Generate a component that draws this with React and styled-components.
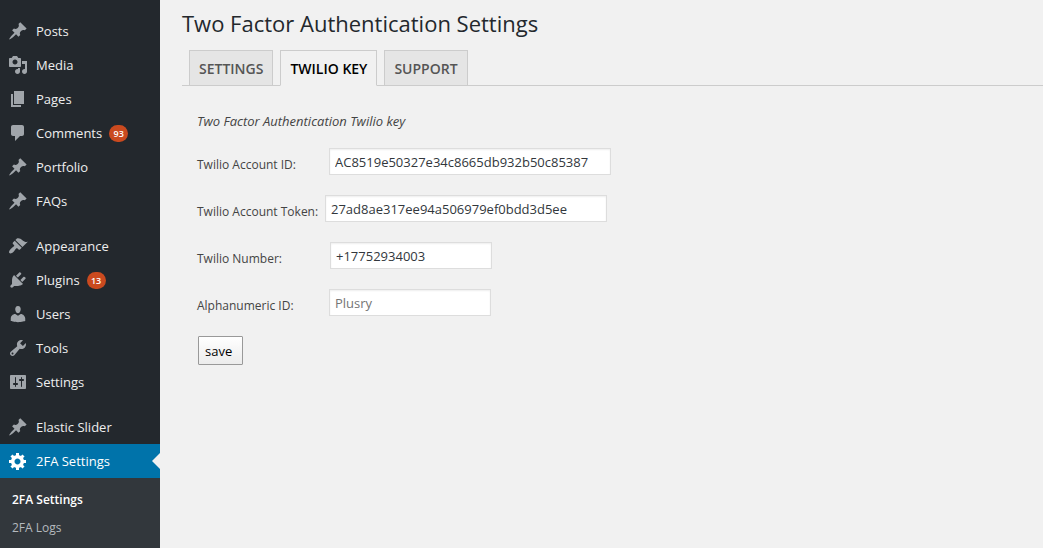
import React, { useState } from 'react';
import styled, { createGlobalStyle } from 'styled-components';

const GlobalStyle = createGlobalStyle`
  * {
    box-sizing: border-box;
  }

  body {
    margin: 0;
    background: #f1f1f1;
    color: #444;
    font-family: 'Open Sans', 'Noto Sans', sans-serif;
    font-size: 12px;
  }
`;

const Layout = styled.div`
  display: flex;
  min-height: 100vh;
`;

// Admin menu
const Sidebar = styled.nav`
  flex: 0 0 160px;
  padding-top: 14px;
  background: #23282d;
`;

const Menu = styled.ul`
  list-style: none;
  margin: 0;
  padding: 0;
`;

const MenuItem = styled.li`
  margin-top: ${(props) => (props.$separated ? '11px' : '0')};
`;

const MenuLink = styled.a`
  position: relative;
  display: flex;
  align-items: center;
  height: 34px;
  padding-left: 8px;
  font-size: 13px;
  line-height: 18px;
  text-decoration: none;
  color: ${(props) => (props.$current ? '#fff' : '#eee')};
  background: ${(props) => (props.$current ? '#0073aa' : 'transparent')};

  svg {
    flex: none;
    margin-right: 8px;
    fill: ${(props) => (props.$current ? '#fff' : '#a0a5aa')};
  }

  /* arrow that points at the open page */
  &::after {
    content: '';
    display: ${(props) => (props.$current ? 'block' : 'none')};
    position: absolute;
    top: 9px;
    right: 0;
    border: 8px solid transparent;
    border-left-width: 0;
    border-right-color: #f1f1f1;
  }
`;

const Badge = styled.span`
  min-width: 19px;
  margin-left: 7px;
  border-radius: 9px;
  background: #ca4a1f;
  color: #fff;
  font-size: 9px;
  font-weight: 600;
  line-height: 17px;
  text-align: center;
`;

const SubMenu = styled.ul`
  list-style: none;
  margin: 0;
  padding: 8px 0 6px;
  background: #32373c;
`;

const SubMenuLink = styled.a`
  display: block;
  padding: 5px 12px;
  font-size: 12px;
  line-height: 18px;
  text-decoration: none;
  font-weight: ${(props) => (props.$current ? '600' : '400')};
  color: ${(props) => (props.$current ? '#fff' : '#b4b9be')};
`;

// Settings page
const Content = styled.main`
  flex: 1;
  min-width: 0;
  padding: 7px 0 40px 22px;
`;

const Title = styled.h1`
  margin: 0;
  color: #23282d;
  font-size: 22px;
  font-weight: 400;
  line-height: 32px;
`;

const TabBar = styled.div`
  display: flex;
  gap: 7px;
  margin-top: 11px;
  padding-left: 7px;
  border-bottom: 1px solid #ccc;
`;

const Tab = styled.button`
  height: 36px;
  margin-bottom: -1px;
  padding: 0 9px;
  border: 1px solid #ccc;
  border-bottom-color: ${(props) => (props.$active ? '#f1f1f1' : '#ccc')};
  background: ${(props) => (props.$active ? '#f1f1f1' : '#e5e5e5')};
  color: ${(props) => (props.$active ? '#000' : '#555')};
  font-family: inherit;
  font-size: 14px;
  font-weight: 600;
  cursor: pointer;
`;

const Form = styled.form`
  padding: 26px 15px 0;
`;

const Description = styled.p`
  margin: 0 0 18px;
  font-size: 13px;
  font-style: italic;
  line-height: 18px;
`;

const Field = styled.div`
  display: flex;
  align-items: center;
  margin-bottom: 20px;
`;

const Label = styled.label`
  width: ${(props) => props.$width || '132px'};
  padding-top: 7px;
  line-height: 18px;
  white-space: nowrap;
`;

const Input = styled.input`
  width: ${(props) => (props.$wide ? '282px' : '162px')};
  height: 27px;
  padding: 2px 5px;
  border: 1px solid #ddd;
  background: #fff;
  box-shadow: inset 0 1px 2px rgba(0, 0, 0, 0.07);
  color: #32373c;
  font-family: inherit;
  font-size: 13px;

  &::placeholder {
    color: #757575;
    opacity: 1;
  }
`;

const SaveButton = styled.button`
  display: block;
  height: 29px;
  margin-left: 1px;
  padding: 1px 10px 0 6px;
  border: 1px solid #999;
  border-radius: 1px;
  background: linear-gradient(#fff, #ececec);
  color: #000;
  font-family: inherit;
  font-size: 13px;
  cursor: pointer;
`;

const icons = {
  pin: 'M10.44 3.02l1.82-1.82 6.36 6.35-1.83 1.82c-1.05-.68-2.48-.57-3.41.36l-.75.75c-.92.93-1.04 2.35-.35 3.41l-1.83 1.82-2.41-2.41-2.8 2.79c-.42.42-3.38 2.71-3.8 2.29s1.86-3.39 2.28-3.81l2.79-2.79L4.1 9.36l1.83-1.82c1.05.69 2.48.57 3.4-.36l.75-.75c.93-.92 1.05-2.35.36-3.41z',
  media: 'M13 11V4c0-.55-.45-1-1-1h-1.67L9 1H5L3.67 3H2c-.55 0-1 .45-1 1v7c0 .55.45 1 1 1h10c.55 0 1-.45 1-1zM7 4.5c1.38 0 2.5 1.12 2.5 2.5S8.38 9.5 7 9.5 4.5 8.38 4.5 7 5.62 4.5 7 4.5zM14 6h5v10.5c0 1.38-1.12 2.5-2.5 2.5S14 17.88 14 16.5s1.12-2.5 2.5-2.5c.17 0 .34.02.5.05V9h-3V6zm-4 8.05V13h2v3.5c0 1.38-1.12 2.5-2.5 2.5S7 17.88 7 16.5 8.12 14 9.5 14c.17 0 .34.02.5.05z',
  page: 'M6 15V2h10v13H6zm-1 1h8v2H3V5h2v11z',
  comments: 'M5 2h9c1.1 0 2 .9 2 2v7c0 1.1-.9 2-2 2h-2l-5 5v-5H5c-1.1 0-2-.9-2-2V4c0-1.1.9-2 2-2z',
  appearance: 'M14.48 11.06L7.41 3.99l1.5-1.5c.5-.56 2.3-.47 3.51.32 1.21.8 1.43 1.28 2.91 2.1 1.18.64 2.45 1.26 4.45.85zm-.71.71L6.7 4.7 4.93 6.47c-.39.39-.39 1.02 0 1.41l1.06 1.06c.39.39.39 1.03 0 1.42-.6.6-1.43 1.11-2.21 1.69-.35.26-.7.53-1.01.84C1.43 14.23.4 16.08 1.4 17.07c.99 1 2.84-.03 4.18-1.36.31-.31.58-.66.85-1.02.57-.78 1.08-1.61 1.69-2.21.39-.39 1.02-.39 1.41 0l1.06 1.06c.39.39 1.02.39 1.41 0z',
  plugins: 'M13.11 4.36L9.87 7.6 8 5.73l3.24-3.24c.35-.34 1.05-.2 1.56.32.52.51.66 1.21.31 1.55zm-8 1.77l.91-1.12 9.01 9.01-1.19.84c-.71.71-2.63 1.16-3.82 1.16H6.14L4.9 17.26c-.59.59-1.54.59-2.12 0-.59-.58-.59-1.53 0-2.12l1.24-1.24v-3.88c0-1.13.4-3.19 1.09-3.89zm7.26 3.97l3.24-3.24c.34-.35 1.04-.21 1.55.31.52.51.66 1.21.31 1.55l-3.24 3.25z',
  users: 'M10 9.25c-2.27 0-2.73-3.44-2.73-3.44C7 4.02 7.82 2 9.97 2c2.16 0 2.98 2.02 2.71 3.81 0 0-.41 3.44-2.68 3.44zm0 2.57L12.72 10c2.39 0 4.52 2.33 4.52 4.53v2.49s-3.65 1.13-7.24 1.13c-3.65 0-7.24-1.13-7.24-1.13v-2.49c0-2.25 1.94-4.48 4.47-4.48z',
  tools: 'M16.68 9.77c-1.34 1.34-3.3 1.67-4.95.99l-5.41 6.52c-.99.99-2.59.99-3.58 0s-.99-2.59 0-3.57l6.52-5.42c-.68-1.65-.35-3.61.99-4.95 1.28-1.28 3.12-1.62 4.72-1.06l-2.89 2.89 2.82 2.82 2.86-2.87c.53 1.58.18 3.39-1.08 4.65zM3.81 16.21c.4.39 1.04.39 1.43 0 .4-.4.4-1.04 0-1.43-.39-.4-1.03-.4-1.43 0-.39.39-.39 1.03 0 1.43z',
  settings: 'M18 16V4c0-.55-.45-1-1-1H3c-.55 0-1 .45-1 1v12c0 .55.45 1 1 1h14c.55 0 1-.45 1-1zM8 11h1c.55 0 1 .45 1 1s-.45 1-1 1H8v1.5c0 .28-.22.5-.5.5s-.5-.22-.5-.5V13H6c-.55 0-1-.45-1-1s.45-1 1-1h1V5.5c0-.28.22-.5.5-.5s.5.22.5.5V11zm5-2h-1c-.55 0-1-.45-1-1s.45-1 1-1h1V5.5c0-.28.22-.5.5-.5s.5.22.5.5V7h1c.55 0 1 .45 1 1s-.45 1-1 1h-1v5.5c0 .28-.22.5-.5.5s-.5-.22-.5-.5V9z',
  gear: 'M18 12h-2.18c-.17.7-.44 1.35-.81 1.93l1.54 1.54-2.1 2.1-1.54-1.54c-.58.36-1.23.63-1.91.79V19H8v-2.18c-.68-.16-1.33-.43-1.91-.79l-1.54 1.54-2.12-2.12 1.54-1.54c-.36-.58-.63-1.23-.79-1.91H1V9.03h2.17c.16-.7.44-1.35.8-1.94L2.43 5.55l2.1-2.1 1.54 1.54c.58-.37 1.24-.64 1.93-.81V2h3v2.18c.68.16 1.33.43 1.91.79l1.54-1.54 2.12 2.12-1.54 1.54c.36.59.64 1.24.8 1.94H18V12zm-8.5 1.5c1.66 0 3-1.34 3-3s-1.34-3-3-3-3 1.34-3 3 1.34 3 3 3z',
};

const menu = [
  { label: 'Posts', icon: 'pin' },
  { label: 'Media', icon: 'media' },
  { label: 'Pages', icon: 'page' },
  { label: 'Comments', icon: 'comments', count: 93 },
  { label: 'Portfolio', icon: 'pin' },
  { label: 'FAQs', icon: 'pin' },
  { label: 'Appearance', icon: 'appearance', separated: true },
  { label: 'Plugins', icon: 'plugins', count: 13 },
  { label: 'Users', icon: 'users' },
  { label: 'Tools', icon: 'tools' },
  { label: 'Settings', icon: 'settings' },
  { label: 'Elastic Slider', icon: 'pin', separated: true },
  { label: '2FA Settings', icon: 'gear', current: true },
];

const tabs = ['SETTINGS', 'TWILIO KEY', 'SUPPORT'];

const fields = [
  { id: 'account-id', label: 'Twilio Account ID:', value: 'AC8519e50327e34c8665db932b50c85387', wide: true },
  { id: 'account-token', label: 'Twilio Account Token:', value: '27ad8ae317ee94a506979ef0bdd3d5ee', wide: true, labelWidth: '128px' },
  { id: 'number', label: 'Twilio Number:', value: '+17752934003', labelWidth: '133px' },
  { id: 'alphanumeric-id', label: 'Alphanumeric ID:', placeholder: 'Plusry' },
];

const Icon = ({ name }) => (
  <svg width="20" height="20" viewBox="0 0 20 20" aria-hidden="true">
    <path d={icons[name]} />
  </svg>
);

const App = () => {
  const [activeTab, setActiveTab] = useState('TWILIO KEY');

  return (
    <>
      <GlobalStyle />
      <Layout>
        <Sidebar>
          <Menu>
            {menu.map((item) => (
              <MenuItem key={item.label} $separated={item.separated}>
                <MenuLink href="#" $current={item.current}>
                  <Icon name={item.icon} />
                  <span>{item.label}</span>
                  {item.count && <Badge>{item.count}</Badge>}
                </MenuLink>
              </MenuItem>
            ))}
          </Menu>
          <SubMenu>
            <li><SubMenuLink href="#" $current>2FA Settings</SubMenuLink></li>
            <li><SubMenuLink href="#">2FA Logs</SubMenuLink></li>
          </SubMenu>
        </Sidebar>

        <Content>
          <Title>Two Factor Authentication Settings</Title>
          <TabBar role="tablist">
            {tabs.map((tab) => (
              <Tab
                key={tab}
                type="button"
                role="tab"
                aria-selected={tab === activeTab}
                $active={tab === activeTab}
                onClick={() => setActiveTab(tab)}
              >
                {tab}
              </Tab>
            ))}
          </TabBar>

          <Form onSubmit={(e) => e.preventDefault()}>
            <Description>Two Factor Authentication Twilio key</Description>
            {fields.map((field) => (
              <Field key={field.id}>
                <Label htmlFor={field.id} $width={field.labelWidth}>{field.label}</Label>
                <Input
                  id={field.id}
                  type="text"
                  $wide={field.wide}
                  defaultValue={field.value}
                  placeholder={field.placeholder}
                />
              </Field>
            ))}
            <SaveButton type="submit">save</SaveButton>
          </Form>
        </Content>
      </Layout>
    </>
  );
};

export default App;
